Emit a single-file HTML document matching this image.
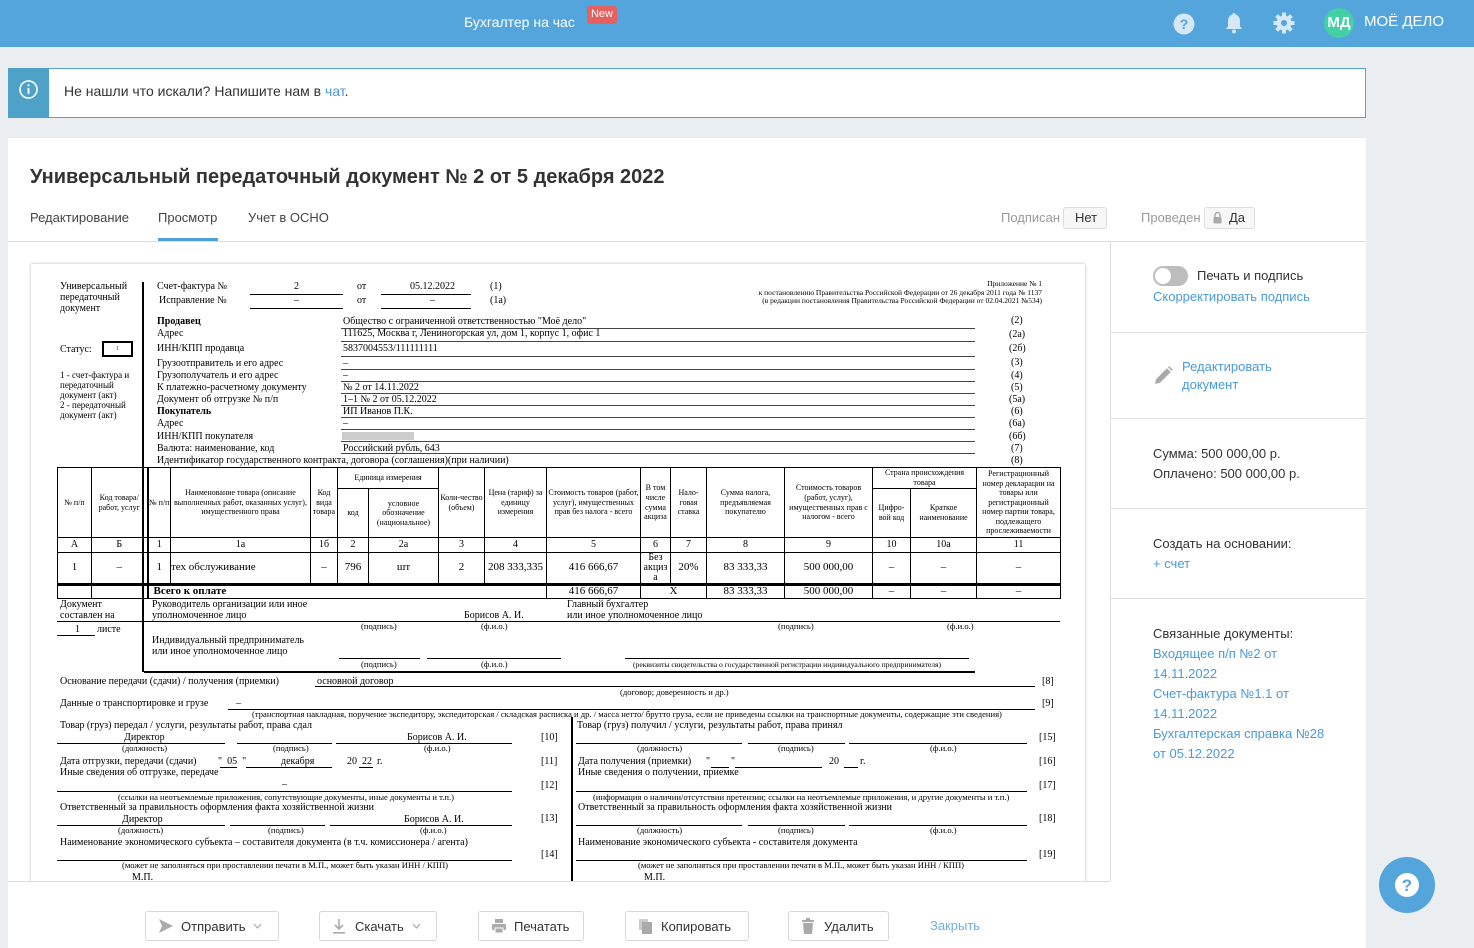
<!DOCTYPE html>
<html><head><meta charset="utf-8">
<style>
*{margin:0;padding:0;box-sizing:border-box}
body{width:1474px;height:948px;overflow:hidden;background:#ebeef1;font-family:"Liberation Sans",sans-serif;position:relative;color:#333}
.a{position:absolute;white-space:nowrap}
.d{position:absolute;white-space:nowrap;font-family:"Liberation Serif",serif;font-size:10px;line-height:11px;color:#000}
.s{font-size:8.6px;line-height:9px}
.b{font-weight:bold}
.l{position:absolute;height:0;border-top:1px solid #000}
.lnk{color:#4a9ad8}
table.t{position:absolute;left:57px;top:467px;border-collapse:collapse;table-layout:fixed;width:1003px;font-family:"Liberation Serif",serif;color:#000}
table.t td{border:1px solid #000;text-align:center;vertical-align:middle;font-size:8px;line-height:9.6px;padding:0;overflow:hidden}
table.t tr.n td{font-size:10px}
table.t tr.v td{font-size:11px}
.btn{position:absolute;top:911px;height:30px;border:1px solid #d6d6d6;border-radius:3px;background:#fff;font-size:13px;color:#333;display:flex;align-items:center;padding-left:12px}
</style></head><body>
<div class="a" style="left:0;top:0;width:1474px;height:47px;background:#53a5dc"></div>
<div class="a" style="left:464px;top:14px;font-size:14px;color:#fff">Бухгалтер на час</div>
<div class="a" style="left:587px;top:6px;width:30px;height:18px;background:#e56060;border-radius:3px;color:#fff;font-size:11px;text-align:center;line-height:16px">New</div>
<svg class="a" style="left:1172px;top:12px" width="24" height="24" viewBox="0 0 24 24"><circle cx="12" cy="12" r="10.5" fill="#d4e8f6"/><text x="12" y="17" text-anchor="middle" font-family="Liberation Sans" font-weight="bold" font-size="14" fill="#53a5dc">?</text></svg>
<svg class="a" style="left:1223px;top:11px" width="22" height="24" viewBox="0 0 22 24"><path d="M11 2c-1 0-1.5.7-1.5 1.5C6.5 4.3 5 7 5 10v5l-2 3h16l-2-3v-5c0-3-1.5-5.7-4.5-6.5C12.5 2.7 12 2 11 2z" fill="#d4e8f6"/><circle cx="11" cy="20.5" r="2" fill="#d4e8f6"/></svg>
<svg class="a" style="left:1272px;top:11px" width="24" height="24" viewBox="0 0 24 24"><g fill="#d4e8f6"><circle cx="12" cy="12" r="7.5"/><g id="tt"><rect x="10" y="1.5" width="4" height="5"/><rect x="10" y="17.5" width="4" height="5"/></g><use href="#tt" transform="rotate(45 12 12)"/><use href="#tt" transform="rotate(90 12 12)"/><use href="#tt" transform="rotate(135 12 12)"/></g><circle cx="12" cy="12" r="3" fill="#53a5dc"/></svg>
<div class="a" style="left:1324px;top:8px;width:30px;height:30px;border-radius:50%;background:#42d0a4;color:#fff;font-weight:bold;font-size:15px;text-align:center;line-height:30px">МД</div>
<div class="a" style="left:1364px;top:13px;font-size:15px;color:#fff">МОЁ ДЕЛО</div>

<div class="a" style="left:8px;top:68px;width:1358px;height:50px;background:#fff;border:1px solid #55a3c9"></div>
<div class="a" style="left:8px;top:68px;width:41px;height:50px;background:#4fa2c7"></div>
<svg class="a" style="left:18px;top:79px" width="21" height="21" viewBox="0 0 21 21"><circle cx="10.5" cy="10.5" r="8.5" fill="none" stroke="#fff" stroke-width="1.6"/><rect x="9.6" y="9" width="1.8" height="6" fill="#fff"/><circle cx="10.5" cy="6.3" r="1.1" fill="#fff"/></svg>
<div class="a" style="left:64px;top:83px;font-size:14px;color:#333">Не нашли что искали? Напишите нам в <span class="lnk">чат</span>.</div>

<div class="a" style="left:8px;top:138px;width:1358px;height:810px;background:#fff"></div>
<div class="a" style="left:30px;top:166px;font-size:20px;font-weight:bold;color:#333">Универсальный передаточный документ № 2 от 5 декабря 2022</div>
<div class="a" style="left:30px;top:210px;font-size:13px;color:#444">Редактирование</div>
<div class="a" style="left:158px;top:210px;font-size:13px;color:#444">Просмотр</div>
<div class="a" style="left:158px;top:238px;width:60px;height:3px;background:#4ea1d8"></div>
<div class="a" style="left:248px;top:210px;font-size:13px;color:#444">Учет в ОСНО</div>
<div class="a" style="left:1001px;top:210px;font-size:13px;color:#999">Подписан</div>
<div class="a" style="left:1063px;top:207px;width:44px;height:22px;border:1px solid #ddd;border-radius:3px;background:#f7f7f7;font-size:13px;line-height:20px;padding-left:11px;color:#333">Нет</div>
<div class="a" style="left:1141px;top:210px;font-size:13px;color:#999">Проведен</div>
<div class="a" style="left:1204px;top:207px;width:51px;height:22px;border:1px solid #ddd;border-radius:3px;background:#f7f7f7;font-size:13px;line-height:20px;padding-left:24px;color:#333">Да</div>
<svg class="a" style="left:1213px;top:211px" width="9" height="13" viewBox="0 0 9 13"><path d="M2 6V4a2.5 2.5 0 0 1 5 0v2" fill="none" stroke="#aaa" stroke-width="1.4"/><rect x="0.5" y="6" width="8" height="6.5" rx="1" fill="#aaa"/></svg>
<div class="a" style="left:8px;top:241px;width:1358px;height:1px;background:#ddd"></div>

<div class="a" style="left:1110px;top:242px;width:1px;height:639px;background:#ddd"></div>
<div class="a" style="left:1110px;top:332px;width:256px;height:1px;background:#ddd"></div>
<div class="a" style="left:1110px;top:418px;width:256px;height:1px;background:#ddd"></div>
<div class="a" style="left:1110px;top:508px;width:256px;height:1px;background:#ddd"></div>
<div class="a" style="left:1110px;top:598px;width:256px;height:1px;background:#ddd"></div>
<div class="a" style="left:1153px;top:266px;width:35px;height:20px;border-radius:10px;background:#bdbdbd"></div>
<div class="a" style="left:1155px;top:268px;width:16px;height:16px;border-radius:50%;background:#fff"></div>
<div class="a" style="left:1197px;top:268px;font-size:13px;color:#333">Печать и подпись</div>
<div class="a lnk" style="left:1153px;top:289px;font-size:13px">Скорректировать подпись</div>
<svg class="a" style="left:1154px;top:366px" width="19" height="19" viewBox="0 0 19 19"><path d="M1 18l1.2-5L13 2.2l3.8 3.8L6 16.8z" fill="#a9a9a9"/><path d="M14 1.2l1.2-1 3.6 3.6-1 1.2z" fill="#a9a9a9"/></svg>
<div class="a lnk" style="left:1182px;top:358px;font-size:13px;line-height:18px">Редактировать<br>документ</div>
<div class="a" style="left:1153px;top:444px;font-size:13px;line-height:20px;color:#333">Сумма: 500 000,00 р.<br>Оплачено: 500 000,00 р.</div>
<div class="a" style="left:1153px;top:534px;font-size:13px;line-height:20px;color:#333">Создать на основании:<br><span class="lnk">+ счет</span></div>
<div class="a" style="left:1153px;top:624px;font-size:13px;line-height:20px;color:#333">Связанные документы:<br><span class="lnk">Входящее п/п №2 от<br>14.11.2022<br>Счет-фактура №1.1 от<br>14.11.2022<br>Бухгалтерская справка №28<br>от 05.12.2022</span></div>

<div class="a" style="left:31px;top:264px;width:1054px;height:620px;background:#fff;box-shadow:0 0 3px rgba(0,0,0,.3)"></div>
<div class="d" style="left:60px;top:281px">Универсальный<br>передаточный<br>документ</div>
<div class="a" style="left:142px;top:282px;width:2px;height:390px;background:#000"></div>
<div class="d" style="left:60px;top:344px">Статус:</div>
<div class="a" style="left:102px;top:341px;width:31px;height:16px;border:2px solid #000;font-family:'Liberation Serif';font-size:6px;text-align:center;line-height:12px">1</div>
<div class="d" style="left:60px;top:370px;line-height:10px;font-size:9px">1 - счет-фактура и<br>передаточный<br>документ (акт)<br>2 - передаточный<br>документ (акт)</div>

<div class="d" style="left:157px;top:281px">Счет-фактура №</div>
<div class="d" style="left:294px;top:281px">2</div>
<div class="l" style="left:250px;top:294px;width:93px"></div>
<div class="d" style="left:357px;top:281px">от</div>
<div class="d" style="left:410px;top:281px">05.12.2022</div>
<div class="l" style="left:381px;top:294px;width:90px"></div>
<div class="d" style="left:490px;top:281px">(1)</div>
<div class="d" style="left:159px;top:295px">Исправление №</div>
<div class="d" style="left:294px;top:295px">–</div>
<div class="l" style="left:250px;top:308px;width:93px"></div>
<div class="d" style="left:357px;top:295px">от</div>
<div class="d" style="left:430px;top:295px">–</div>
<div class="l" style="left:381px;top:308px;width:90px"></div>
<div class="d" style="left:490px;top:295px">(1a)</div>

<div class="d" style="right:432px;top:280px;font-size:7.5px;line-height:8.5px;text-align:right">Приложение № 1<br>к постановлению Правительства Российской Федерации от 26 декабря 2011 года № 1137<br>(в редакции постановления Правительства Российской Федерации от 02.04.2021 №534)</div>

<div class="d b" style="left:157px;top:316px">Продавец</div>
<div class="d" style="left:157px;top:328px">Адрес</div>
<div class="d" style="left:157px;top:343px">ИНН/КПП продавца</div>
<div class="d" style="left:157px;top:358px">Грузоотправитель и его адрес</div>
<div class="d" style="left:157px;top:370px">Грузополучатель и его адрес</div>
<div class="d" style="left:157px;top:382px">К платежно-расчетному документу</div>
<div class="d" style="left:157px;top:394px">Документ об отгрузке № п/п</div>
<div class="d b" style="left:157px;top:406px">Покупатель</div>
<div class="d" style="left:157px;top:418px">Адрес</div>
<div class="d" style="left:157px;top:431px">ИНН/КПП покупателя</div>
<div class="d" style="left:157px;top:443px">Валюта: наименование, код</div>
<div class="d" style="left:157px;top:455px">Идентификатор государственного контракта, договора (соглашения)(при наличии)</div>

<div class="d" style="left:343px;top:316px">Общество с ограниченной ответственностью "Моё дело"</div>
<div class="d" style="left:343px;top:328px">111625, Москва г, Лениногорская ул, дом 1, корпус 1, офис 1</div>
<div class="d" style="left:343px;top:343px">5837004553/111111111</div>
<div class="d" style="left:343px;top:358px">–</div>
<div class="d" style="left:343px;top:370px">–</div>
<div class="d" style="left:343px;top:382px">№ 2 от 14.11.2022</div>
<div class="d" style="left:343px;top:394px">1–1 № 2 от 05.12.2022</div>
<div class="d" style="left:343px;top:406px">ИП Иванов П.К.</div>
<div class="d" style="left:343px;top:418px">–</div>
<div class="a" style="left:342px;top:432px;width:72px;height:8px;background:#ccc"></div>
<div class="d" style="left:343px;top:443px">Российский рубль, 643</div>

<div class="l" style="left:341px;top:328px;width:634px;border-color:#444"></div>
<div class="l" style="left:341px;top:341px;width:634px;border-color:#444"></div>
<div class="l" style="left:341px;top:356px;width:634px;border-color:#444"></div>
<div class="l" style="left:341px;top:369px;width:634px;border-color:#444"></div>
<div class="l" style="left:341px;top:381px;width:634px;border-color:#444"></div>
<div class="l" style="left:341px;top:393px;width:634px;border-color:#444"></div>
<div class="l" style="left:341px;top:405px;width:634px;border-color:#444"></div>
<div class="l" style="left:341px;top:417px;width:634px;border-color:#444"></div>
<div class="l" style="left:341px;top:429px;width:634px;border-color:#444"></div>
<div class="l" style="left:341px;top:441px;width:634px;border-color:#444"></div>
<div class="l" style="left:341px;top:453px;width:634px;border-color:#444"></div>

<div class="d" style="left:1011px;top:315px">(2)</div>
<div class="d" style="left:1009px;top:329px">(2a)</div>
<div class="d" style="left:1009px;top:343px">(2б)</div>
<div class="d" style="left:1011px;top:357px">(3)</div>
<div class="d" style="left:1011px;top:370px">(4)</div>
<div class="d" style="left:1011px;top:382px">(5)</div>
<div class="d" style="left:1009px;top:394px">(5a)</div>
<div class="d" style="left:1011px;top:406px">(6)</div>
<div class="d" style="left:1009px;top:418px">(6a)</div>
<div class="d" style="left:1009px;top:431px">(6б)</div>
<div class="d" style="left:1011px;top:443px">(7)</div>
<div class="d" style="left:1011px;top:455px">(8)</div>

<table class="t">
<colgroup><col style="width:34px"><col style="width:56px"><col style="width:23px"><col style="width:140px"><col style="width:27px"><col style="width:31px"><col style="width:70px"><col style="width:46px"><col style="width:62px"><col style="width:94px"><col style="width:30px"><col style="width:36px"><col style="width:78px"><col style="width:88px"><col style="width:38px"><col style="width:66px"><col style="width:84px"></colgroup>
<tr style="height:21px"><td rowspan="2">№ п/п</td><td rowspan="2">Код товара/ работ, услуг</td><td rowspan="2" style="border-left:2px solid #000">№ п/п</td><td rowspan="2">Наименование товара (описание выполненных работ, оказанных услуг), имущественного права</td><td rowspan="2">Код вида товара</td><td colspan="2">Единица измерения</td><td rowspan="2">Коли-чество (объем)</td><td rowspan="2">Цена (тариф) за единицу измерения</td><td rowspan="2">Стоимость товаров (работ, услуг), имущественных прав без налога - всего</td><td rowspan="2">В том числе сумма акциза</td><td rowspan="2">Нало-говая ставка</td><td rowspan="2">Сумма налога, предъявляемая покупателю</td><td rowspan="2">Стоимость товаров (работ, услуг), имущественных прав с налогом - всего</td><td colspan="2">Страна происхождения товара</td><td rowspan="2">Регистрационный номер декларации на товары или регистрационный номер партии товара, подлежащего прослеживаемости</td></tr>
<tr style="height:49px"><td>код</td><td>условное обозначение (национальное)</td><td>Цифро-вой код</td><td>Краткое наименование</td></tr>
<tr class="n" style="height:15px"><td>А</td><td>Б</td><td style="border-left:2px solid #000">1</td><td>1а</td><td>1б</td><td>2</td><td>2а</td><td>3</td><td>4</td><td>5</td><td>6</td><td>7</td><td>8</td><td>9</td><td>10</td><td>10а</td><td>11</td></tr>
<tr class="v" style="height:31px"><td>1</td><td>–</td><td style="border-left:2px solid #000">1</td><td style="text-align:left">тех обслуживание</td><td>–</td><td>796</td><td>шт</td><td>2</td><td>208 333,335</td><td>416 666,67</td><td style="font-size:10px;line-height:10px">Без акциз а</td><td>20%</td><td>83 333,33</td><td>500 000,00</td><td>–</td><td>–</td><td>–</td></tr>
<tr class="v" style="height:14px;border-top:3px solid #000"><td></td><td></td><td colspan="7" class="b" style="text-align:left;padding-left:5px;border-left:2px solid #000">Всего к оплате</td><td>416 666,67</td><td colspan="2">X</td><td>83 333,33</td><td>500 000,00</td><td>–</td><td>–</td><td>–</td></tr>
</table>

<div class="d" style="left:60px;top:599px">Документ<br>составлен на</div>
<div class="l" style="left:57px;top:621px;width:1003px"></div>
<div class="d" style="left:152px;top:599px">Руководитель организации или иное<br>уполномоченное лицо</div>
<div class="d" style="left:464px;top:610px">Борисов А. И.</div>
<div class="d" style="left:567px;top:599px">Главный бухгалтер<br>или иное уполномоченное лицо</div>
<div class="d s" style="left:361px;top:622px">(подпись)</div>
<div class="d s" style="left:481px;top:622px">(ф.и.о.)</div>
<div class="d s" style="left:778px;top:622px">(подпись)</div>
<div class="d s" style="left:947px;top:622px">(ф.и.о.)</div>
<div class="d" style="left:75px;top:624px">1</div>
<div class="l" style="left:57px;top:635px;width:38px"></div>
<div class="d" style="left:97px;top:624px">листе</div>
<div class="d" style="left:152px;top:635px">Индивидуальный предприниматель<br>или иное уполномоченное лицо</div>
<div class="l" style="left:339px;top:658px;width:81px"></div>
<div class="l" style="left:427px;top:658px;width:134px"></div>
<div class="l" style="left:625px;top:658px;width:344px"></div>
<div class="d s" style="left:361px;top:660px">(подпись)</div>
<div class="d s" style="left:481px;top:660px">(ф.и.о.)</div>
<div class="d s" style="left:633px;top:660px;font-size:7.6px">(реквизиты свидетельства о государственной регистрации индивидуального предпринимателя)</div>
<div class="a" style="left:144px;top:671px;width:831px;height:2px;background:#000"></div>

<div class="d" style="left:60px;top:676px">Основание передачи (сдачи) / получения (приемки)</div>
<div class="d" style="left:317px;top:676px">основной договор</div>
<div class="l" style="left:315px;top:686px;width:720px"></div>
<div class="d" style="left:1042px;top:676px">[8]</div>
<div class="d s" style="left:620px;top:688px">(договор; доверенность и др.)</div>
<div class="d" style="left:60px;top:698px">Данные о транспортировке и грузе</div>
<div class="d" style="left:236px;top:698px">–</div>
<div class="l" style="left:228px;top:709px;width:807px"></div>
<div class="d" style="left:1042px;top:698px">[9]</div>
<div class="d s" style="left:252px;top:710px">(транспортная накладная, поручение экспедитору, экспедиторская / складская расписка и др. / масса нетто/ брутто груза, если не приведены ссылки на транспортные документы, содержащие эти сведения)</div>
<div class="a" style="left:571px;top:717px;width:2px;height:164px;background:#000"></div>

<div class="d" style="left:60px;top:720px">Товар (груз) передал / услуги, результаты работ, права сдал</div>
<div class="d" style="left:124px;top:732px">Директор</div>
<div class="d" style="left:407px;top:732px">Борисов А. И.</div>
<div class="l" style="left:57px;top:743px;width:168px"></div>
<div class="l" style="left:237px;top:743px;width:95px"></div>
<div class="l" style="left:336px;top:743px;width:176px"></div>
<div class="d" style="left:541px;top:732px">[10]</div>
<div class="d s" style="left:122px;top:744px">(должность)</div>
<div class="d s" style="left:273px;top:744px">(подпись)</div>
<div class="d s" style="left:424px;top:744px">(ф.и.о.)</div>
<div class="d" style="left:60px;top:756px">Дата отгрузки, передачи (сдачи)</div>
<div class="d" style="left:218px;top:756px">"&nbsp;&nbsp;05&nbsp;&nbsp;"</div>
<div class="l" style="left:220px;top:767px;width:17px"></div>
<div class="d" style="left:281px;top:756px">декабря</div>
<div class="l" style="left:246px;top:767px;width:86px"></div>
<div class="d" style="left:347px;top:756px">20 &nbsp;22 &nbsp;г.</div>
<div class="l" style="left:359px;top:767px;width:14px"></div>
<div class="d" style="left:541px;top:756px">[11]</div>
<div class="d" style="left:60px;top:767px">Иные сведения об отгрузке, передаче</div>
<div class="d" style="left:282px;top:779px">–</div>
<div class="l" style="left:57px;top:791px;width:455px"></div>
<div class="d" style="left:541px;top:780px">[12]</div>
<div class="d s" style="left:118px;top:793px">(ссылки на неотъемлемые приложения, сопутствующие документы, иные документы и т.п.)</div>
<div class="d" style="left:60px;top:802px">Ответственный за правильность оформления факта хозяйственной жизни</div>
<div class="d" style="left:122px;top:814px">Директор</div>
<div class="d" style="left:404px;top:814px">Борисов А. И.</div>
<div class="l" style="left:57px;top:825px;width:168px"></div>
<div class="l" style="left:230px;top:825px;width:95px"></div>
<div class="l" style="left:330px;top:825px;width:182px"></div>
<div class="d" style="left:541px;top:813px">[13]</div>
<div class="d s" style="left:118px;top:826px">(должность)</div>
<div class="d s" style="left:268px;top:826px">(подпись)</div>
<div class="d s" style="left:420px;top:826px">(ф.и.о.)</div>
<div class="d" style="left:60px;top:837px">Наименование экономического субъекта – составителя документа (в т.ч. комиссионера / агента)</div>
<div class="l" style="left:57px;top:860px;width:455px"></div>
<div class="d" style="left:541px;top:849px">[14]</div>
<div class="d s" style="left:122px;top:861px">(может не заполняться при проставлении печати в М.П., может быть указан ИНН / КПП)</div>
<div class="d" style="left:132px;top:872px">М.П.</div>

<div class="d" style="left:577px;top:720px">Товар (груз) получил / услуги, результаты работ, права принял</div>
<div class="l" style="left:576px;top:743px;width:166px"></div>
<div class="l" style="left:748px;top:743px;width:97px"></div>
<div class="l" style="left:849px;top:743px;width:178px"></div>
<div class="d" style="left:1039px;top:732px">[15]</div>
<div class="d s" style="left:637px;top:744px">(должность)</div>
<div class="d s" style="left:778px;top:744px">(подпись)</div>
<div class="d s" style="left:930px;top:744px">(ф.и.о.)</div>
<div class="d" style="left:578px;top:756px">Дата получения (приемки)</div>
<div class="d" style="left:706px;top:756px">"</div>
<div class="l" style="left:711px;top:767px;width:18px"></div>
<div class="d" style="left:731px;top:756px">"</div>
<div class="l" style="left:735px;top:767px;width:87px"></div>
<div class="d" style="left:829px;top:756px">20</div>
<div class="l" style="left:844px;top:767px;width:14px"></div>
<div class="d" style="left:860px;top:756px">г.</div>
<div class="d" style="left:1039px;top:756px">[16]</div>
<div class="d" style="left:578px;top:767px">Иные сведения о получении, приемке</div>
<div class="l" style="left:576px;top:791px;width:451px"></div>
<div class="d" style="left:1039px;top:780px">[17]</div>
<div class="d s" style="left:593px;top:793px">(информация о наличии/отсутствии претензии; ссылки на неотъемлемые приложения, и другие документы и т.п.)</div>
<div class="d" style="left:578px;top:802px">Ответственный за правильность оформления факта хозяйственной жизни</div>
<div class="l" style="left:576px;top:825px;width:166px"></div>
<div class="l" style="left:748px;top:825px;width:97px"></div>
<div class="l" style="left:849px;top:825px;width:178px"></div>
<div class="d" style="left:1039px;top:813px">[18]</div>
<div class="d s" style="left:637px;top:826px">(должность)</div>
<div class="d s" style="left:778px;top:826px">(подпись)</div>
<div class="d s" style="left:930px;top:826px">(ф.и.о.)</div>
<div class="d" style="left:578px;top:837px">Наименование экономического субъекта - составителя документа</div>
<div class="l" style="left:576px;top:860px;width:451px"></div>
<div class="d" style="left:1039px;top:849px">[19]</div>
<div class="d s" style="left:638px;top:861px">(может не заполняться при проставлении печати в М.П., может быть указан ИНН / КПП)</div>
<div class="d" style="left:644px;top:872px">М.П.</div>

<div class="a" style="left:8px;top:881px;width:1102px;height:67px;background:#fff;border-top:1px solid #ddd"></div>
<div class="btn" style="left:145px;width:134px"><svg width="16" height="16" viewBox="0 0 16 16" style="margin-right:7px"><path d="M1 1l14 7-14 7 3-7z" fill="#aaa"/></svg>Отправить<svg width="9" height="6" viewBox="0 0 9 6" style="margin-left:8px"><path d="M1 1l3.5 4 3.5-4" fill="none" stroke="#aaa" stroke-width="1.2"/></svg></div>
<div class="btn" style="left:319px;width:118px"><svg width="14" height="16" viewBox="0 0 14 16" style="margin-right:9px"><path d="M7 1v10M3 7l4 4 4-4" fill="none" stroke="#aaa" stroke-width="1.6"/><rect x="1" y="14" width="12" height="1.6" fill="#aaa"/></svg>Скачать<svg width="9" height="6" viewBox="0 0 9 6" style="margin-left:8px"><path d="M1 1l3.5 4 3.5-4" fill="none" stroke="#aaa" stroke-width="1.2"/></svg></div>
<div class="btn" style="left:478px;width:106px"><svg width="16" height="16" viewBox="0 0 16 16" style="margin-right:7px"><rect x="4" y="1" width="8" height="4" fill="#aaa"/><rect x="1" y="6" width="14" height="6" rx="1" fill="#aaa"/><rect x="4" y="10" width="8" height="5" fill="#aaa" stroke="#fff"/></svg>Печатать</div>
<div class="btn" style="left:625px;width:124px"><svg width="16" height="16" viewBox="0 0 16 16" style="margin-right:7px"><rect x="1" y="1" width="9" height="11" fill="#ccc"/><rect x="4" y="4" width="10" height="12" fill="#aaa"/></svg>Копировать</div>
<div class="btn" style="left:788px;width:101px"><svg width="14" height="16" viewBox="0 0 14 16" style="margin-right:9px"><rect x="1" y="2" width="12" height="2" fill="#aaa"/><rect x="5" y="0" width="4" height="2" fill="#aaa"/><path d="M2 5h10l-1 11H3z" fill="#aaa"/></svg>Удалить</div>
<div class="a" style="left:930px;top:918px;font-size:13px;color:#6fb0e0">Закрыть</div>

<div class="a" style="left:1379px;top:857px;width:56px;height:56px;border-radius:50%;background:#53a5dc"></div>
<svg class="a" style="left:1395px;top:873px" width="24" height="24" viewBox="0 0 24 24"><circle cx="12" cy="12" r="12" fill="#fff"/><text x="12" y="18" text-anchor="middle" font-family="Liberation Sans" font-weight="bold" font-size="17" fill="#53a5dc">?</text></svg>
</body></html>
